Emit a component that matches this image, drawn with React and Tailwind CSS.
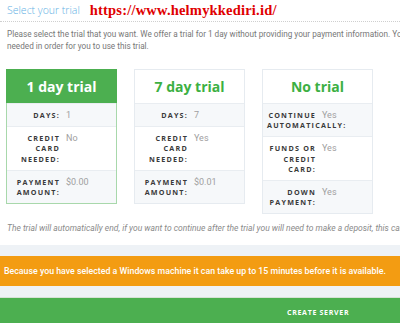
import React from "react";

const Row = ({ label, value, gray, first }) => (
  <div
    className={`flex gap-[6px] pl-[4px] pr-[4px] py-[6px] ${first ? "" : "border-t border-[#e9edf1]"} ${gray ? "bg-[#f6f8fa]" : "bg-white"}`}
  >
    <div className="w-[49px] shrink-0 text-right text-[7.2px] leading-[10.2px] font-bold tracking-[1.2px] text-[#3a3a3a] uppercase [font-family:'Open_Sans',sans-serif]">
      {label}
    </div>
    <div className="text-[9px] leading-[10.2px] text-[#a0a0a0] [font-family:Roboto,sans-serif]">{value}</div>
  </div>
);

const Card = ({ title, active, rows }) => (
  <div
    className={`w-[111px] shrink-0 border ${active ? "border-[#a8d8ab]" : "border-[#e6ebf0]"} bg-white`}
  >
    <div
      className={`flex items-center justify-center text-[14px] font-bold [font-family:'Open_Sans',sans-serif] ${
        active ? "bg-[#4caf50] text-white -mx-px -mt-px h-[34px]" : "text-[#3cb043] h-[33px]"
      }`}
    >
      {title}
    </div>
    {rows.map((r, i) => (
      <Row key={i} label={r[0]} value={r[1]} gray={i % 2 === 0} />
    ))}
  </div>
);

export default function App() {
  return (
    <div className="w-[400px] h-[323px] overflow-hidden bg-white relative">
      <div className="w-[640px]">
        <div className="h-[22px] flex items-center pl-[7px] border-b border-dotted border-[#cfcfcf]">
          <span className="text-[10.5px] font-light text-[#62b0e4] [font-family:'Open_Sans',sans-serif]">
            Select your trial
          </span>
          <span className="ml-[10px] text-[14.5px] font-bold text-[#e00000] tracking-[0.2px] [font-family:'Liberation_Serif',serif]">
            https://www.helmykkediri.id/
          </span>
        </div>
        <div className="pl-[7px] pt-[6px] text-[8.2px] leading-[12px] text-[#777] [font-family:Roboto,sans-serif] whitespace-nowrap">
          Please select the trial that you want. We offer a trial for 1 day without providing your payment
          information. You can upgrade this trial to a 7 day trial for only $0.01, a credit card will be
          <br />
          needed in order for you to use this trial.
        </div>
        <div className="flex items-start gap-[17px] pl-[6px] mt-[17px]">
          <Card
            title="1 day trial"
            active
            rows={[
              ["Days:", "1"],
              ["Credit card needed:", "No"],
              ["Payment amount:", "$0.00"],
            ]}
          />
          <Card
            title="7 day trial"
            rows={[
              ["Days:", "7"],
              ["Credit card needed:", "Yes"],
              ["Payment amount:", "$0.01"],
            ]}
          />
          <Card
            title="No trial"
            rows={[
              ["Continue automatically:", "Yes"],
              ["Funds or credit card:", "Yes"],
              ["Down payment:", "Yes"],
            ]}
          />
        </div>
        <div className="pl-[7px] mt-[8px] text-[8.5px] leading-[12px] italic text-[#8a8a8a] [font-family:Roboto,sans-serif] whitespace-nowrap">
          The trial will automatically end, if you want to continue after the trial you will need to make a deposit, this can be done on the billing page.
        </div>
        <div className="mt-[11px] h-[11px] bg-[#eef2f6]" />
        <div className="h-[30px] bg-[#f39c12] flex items-center pl-[4px] text-white text-[8.8px] font-medium [font-family:Roboto,sans-serif] whitespace-nowrap">
          Because you have selected a Windows machine it can take up to 15 minutes before it is available.
        </div>
        <div className="h-[11px] bg-[#eef2f6]" />
        <div className="h-[30px] bg-[#4caf50] flex items-center pl-[287px] border-t border-[#d7e2d7]">
          <span className="text-white text-[7px] font-bold tracking-[0.7px] [font-family:'Open_Sans',sans-serif]">
            CREATE SERVER
          </span>
        </div>
      </div>
    </div>
  );
}
